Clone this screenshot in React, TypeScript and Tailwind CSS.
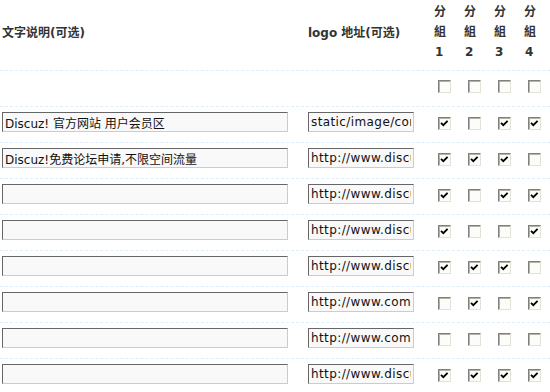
import React from "react";

type Row = { text: string; url: string; groups: boolean[] };

const rows: Row[] = [
  { text: "Discuz! 官方网站 用户会员区", url: "static/image/common/logo_88_31.gif", groups: [true, false, true, true] },
  { text: "Discuz!免费论坛申请,不限空间流量", url: "http://www.discuz.net/freeforum", groups: [true, true, true, false] },
  { text: "", url: "http://www.discuz.net/logo.gif", groups: [true, false, true, true] },
  { text: "", url: "http://www.discuz.com/logo.gif", groups: [true, false, false, true] },
  { text: "", url: "http://www.discuz.net/link.gif", groups: [true, true, true, false] },
  { text: "", url: "http://www.comsenz.com/logo.gif", groups: [false, true, false, true] },
  { text: "", url: "http://www.comsenz.com/link.gif", groups: [false, false, false, false] },
  { text: "", url: "http://www.discuz.net/images.gif", groups: [true, true, true, true] },
];

const font = { fontFamily: '"DejaVu Sans", "Noto Sans CJK SC", sans-serif' };

const Box = ({ checked }: { checked: boolean }) => (
  <span className="relative mt-[5px] ml-[4px] block h-[13px] w-[13px] border border-t-[#808080] border-l-[#808080] border-r-[#e4e2d6] border-b-[#e4e2d6] bg-[#fcfcf9] shadow-[inset_1px_1px_0_#b3b1a4]">
    {checked && (
      <svg className="absolute left-[-1px] top-[-1px]" width="13" height="13" viewBox="0 0 13 13">
        <path d="M3 5.8 L5.3 8.2 L9.6 3.8" fill="none" stroke="#000" strokeWidth="1.8" />
      </svg>
    )}
  </span>
);

const Checks = ({ groups }: { groups: boolean[] }) => (
  <div className="ml-[20px] flex shrink-0">
    {groups.map((g, i) => (
      <div key={i} className="w-[30px] shrink-0">
        <Box checked={g} />
      </div>
    ))}
  </div>
);

const Field = ({ value, className }: { value: string; className: string }) => (
  <input
    readOnly
    defaultValue={value}
    className={`${className} h-[20px] shrink-0 border border-t-[#666] border-l-[#666] border-r-[#ccc] border-b-[#ccc] bg-[#f9f9f9] px-[2px] text-[12px] leading-[18px] text-[#111] outline-none`}
    style={font}
  />
);

export default function App() {
  return (
    <div className="h-[392px] w-[550px] overflow-hidden bg-white text-[12px] text-[#333]" style={font}>
      <div className="flex h-[70px] pl-[2px]">
        <div className="w-[286px] shrink-0 pt-[23px] font-bold leading-[20px]">文字说明(可选)</div>
        <div className="ml-[20px] w-[106px] shrink-0 whitespace-nowrap pt-[23px] font-bold leading-[20px]">logo 地址(可选)</div>
        <div className="ml-[20px] flex shrink-0">
          {[1, 2, 3, 4].map((n) => (
            <div key={n} className="w-[30px] shrink-0 pt-[2px] font-bold leading-[20px]">
              <div>分</div>
              <div>組</div>
              <div className="pl-[1px]">{n}</div>
            </div>
          ))}
        </div>
      </div>

      <div className="flex h-[36px] border-t border-dashed border-[#deeffb] pl-[2px] pt-[4px]">
        <div className="w-[286px] shrink-0" />
        <div className="ml-[20px] w-[106px] shrink-0" />
        <Checks groups={[false, false, false, false]} />
      </div>

      {rows.map((r, i) => (
        <div key={i} className="flex h-[36px] items-start border-t border-dashed border-[#deeffb] pl-[2px] pt-[5px]">
          <Field value={r.text} className="w-[286px]" />
          <div className="ml-[20px] shrink-0">
            <Field value={r.url} className="w-[106px] tracking-[0.4px]" />
          </div>
          <Checks groups={r.groups} />
        </div>
      ))}
    </div>
  );
}
